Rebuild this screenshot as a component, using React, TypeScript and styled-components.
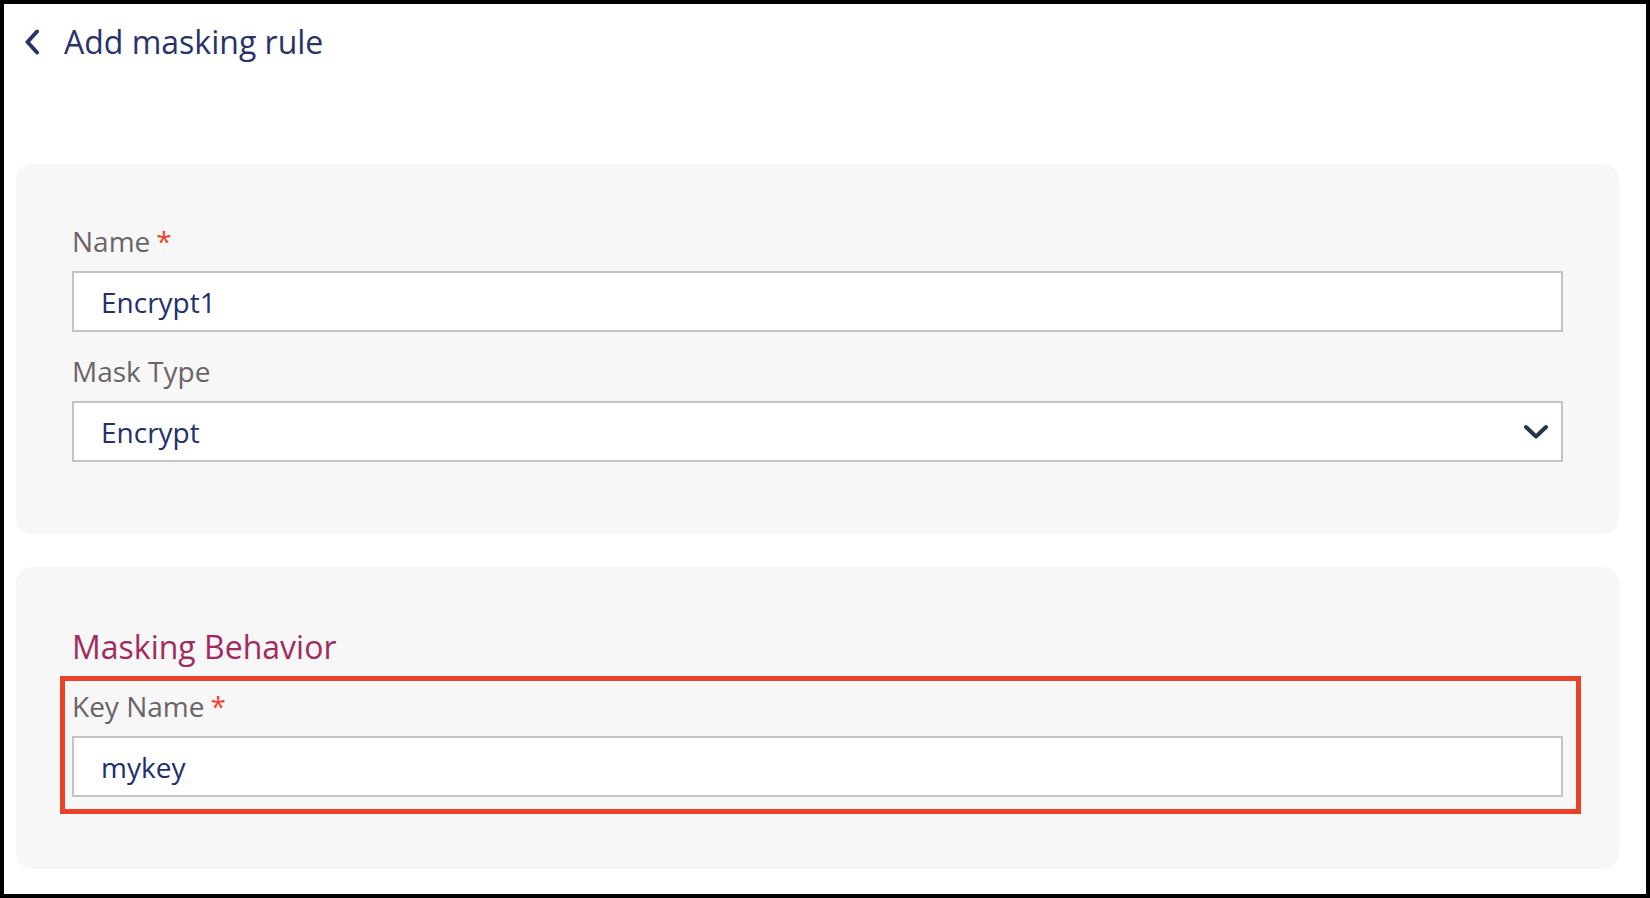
import React from "react";
import styled, { createGlobalStyle } from "styled-components";

const GlobalStyle = createGlobalStyle`
  html, body {
    margin: 0;
    padding: 0;
    background: #ffffff;
  }
  * {
    box-sizing: border-box;
  }
`;

const BackIcon: React.FC = () => (
  <svg width="16" height="26" viewBox="0 0 16 26" fill="none">
    <polyline
      points="13,2.5 3.5,13 13,23.5"
      stroke="#27336a"
      strokeWidth="4"
      strokeLinecap="round"
      strokeLinejoin="round"
    />
  </svg>
);

const ChevronDown: React.FC = () => (
  <svg width="26" height="16" viewBox="0 0 26 16" fill="none">
    <polyline
      points="3,3 13,12.5 23,3"
      stroke="#2a3349"
      strokeWidth="4"
      strokeLinecap="round"
      strokeLinejoin="round"
    />
  </svg>
);

type FieldProps = {
  label: string;
  value: string;
  required?: boolean;
  select?: boolean;
};

const Field: React.FC<FieldProps> = ({ label, value, required, select }) => (
  <FieldBlock>
    <Label>
      {label}
      {required && <Required>*</Required>}
    </Label>
    <InputBox>
      <InputText>{value}</InputText>
      {select && (
        <SelectArrow>
          <ChevronDown />
        </SelectArrow>
      )}
    </InputBox>
  </FieldBlock>
);

const App: React.FC = () => (
  <>
    <GlobalStyle />
    <Frame>
      <Header>
        <BackButton>
          <BackIcon />
        </BackButton>
        <Title>Add masking rule</Title>
      </Header>
      <Panels>
        <Panel>
          <Fields>
            <Field label="Name" value="Encrypt1" required />
            <Field label="Mask Type" value="Encrypt" select />
          </Fields>
        </Panel>
        <Panel>
          <SectionTitle>Masking Behavior</SectionTitle>
          <Highlight>
            <Field label="Key Name" value="mykey" required />
          </Highlight>
        </Panel>
      </Panels>
    </Frame>
  </>
);

export default App;

const Frame = styled.div`
  width: 100vw;
  height: 100vh;
  border: 4px solid #000000;
  background: #ffffff;
  font-family: "Open Sans", "Noto Sans", sans-serif;
  overflow: hidden;
`;

const Header = styled.div`
  display: flex;
  align-items: center;
  height: 42px;
  margin-top: 17px;
  padding-left: 20px;
`;

const BackButton = styled.div`
  display: flex;
  width: 16px;
  height: 26px;
  margin-right: 24px;
`;

const Title = styled.h1`
  margin: 0;
  font-size: 32px;
  line-height: 42px;
  font-weight: 400;
  color: #27336a;
`;

const Panels = styled.div`
  display: flex;
  flex-direction: column;
  gap: 33px;
  margin: 101px 27px 0 12px;
`;

const Panel = styled.section`
  background: #f7f7f7;
  border-radius: 16px;
  padding: 57px 56px 72px;
`;

const Fields = styled.div`
  display: flex;
  flex-direction: column;
  gap: 20px;
  padding-top: 1px;
`;

const FieldBlock = styled.div`
  display: flex;
  flex-direction: column;
  gap: 11px;
`;

const Label = styled.label`
  display: flex;
  align-items: baseline;
  font-size: 28px;
  line-height: 38px;
  color: #6c6368;
`;

const Required = styled.span`
  margin-left: 6px;
  color: #f0432f;
`;

const InputBox = styled.div`
  display: flex;
  align-items: center;
  height: 61px;
  padding: 0 12px 0 27px;
  background: #ffffff;
  border: 2px solid #c4c4c4;
`;

const InputText = styled.span`
  flex: 1;
  font-size: 28px;
  line-height: 38px;
  color: #24306b;
`;

const SelectArrow = styled.span`
  display: flex;
`;

const SectionTitle = styled.h2`
  margin: 2px 0 19px;
  font-size: 32px;
  line-height: 42px;
  font-weight: 400;
  color: #a32a60;
`;

const Highlight = styled.div`
  position: relative;

  &::after {
    content: "";
    position: absolute;
    top: -11px;
    bottom: -17px;
    left: -12px;
    right: -18px;
    border: 5px solid #ea4129;
    pointer-events: none;
  }
`;
